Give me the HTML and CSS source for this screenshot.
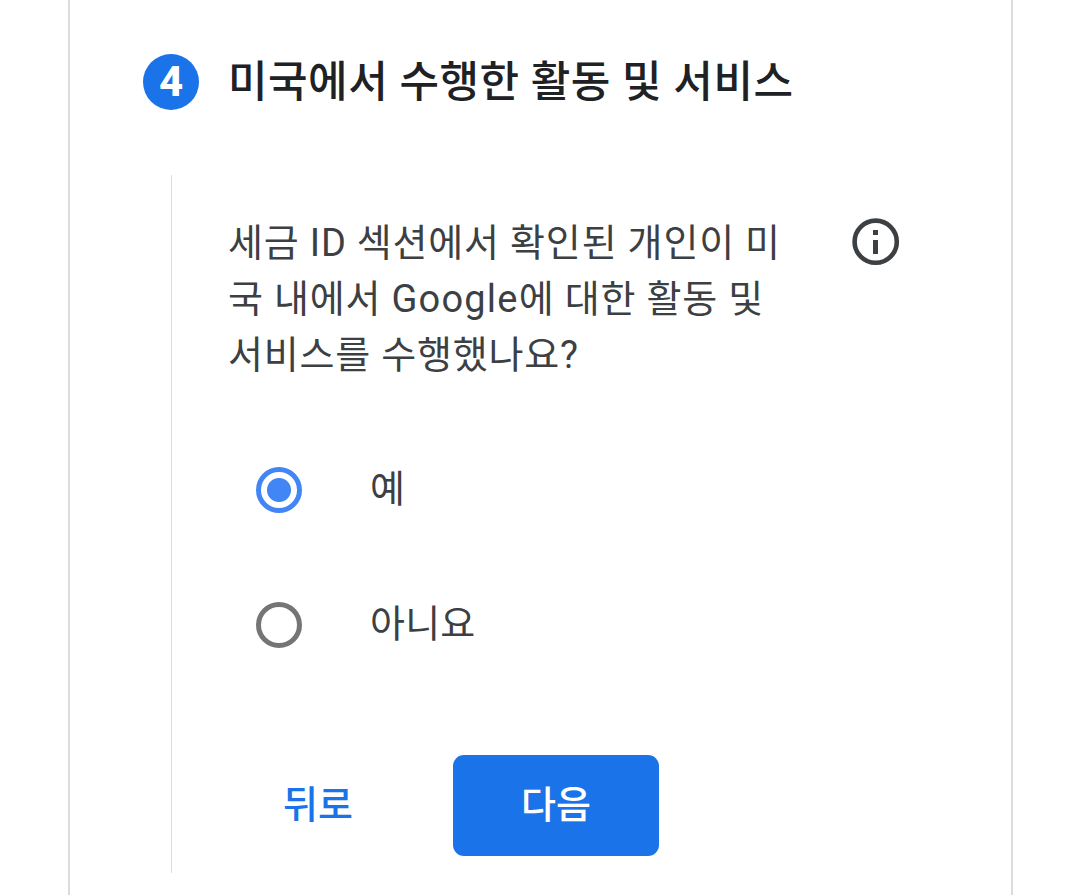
FILE: index.html
```html
<!DOCTYPE html>
<html lang="ko">
<head>
    <meta charset="UTF-8">
    <meta name="viewport" content="width=device-width, initial-scale=1.0">
    <title>세금 정보</title>
    <link rel="stylesheet" href="styles.css">
</head>
<body>

    <div class="card">
        <div class="step-header">
            <div class="step-number">4</div>
            <h2>미국에서 수행한 활동 및 서비스</h2>
        </div>

        <div class="step-body">
            <div class="question">
                <p>세금 ID 섹션에서 확인된 개인이 미<br>국 내에서 <span class="latin">Google</span>에 대한 활동 및<br>서비스를 수행했나요?</p>
                <svg class="info-icon" viewBox="0 0 48 48">
                    <circle cx="23.7" cy="23.7" r="21.1" fill="none" stroke="#3c4043" stroke-width="4.6"/>
                    <rect x="21" y="12" width="5" height="5" fill="#3c4043"/>
                    <rect x="21" y="22" width="5" height="14" fill="#3c4043"/>
                </svg>
            </div>

            <div class="options">
                <label class="option">
                    <input type="radio" name="activity" checked>
                    <span>예</span>
                </label>
                <label class="option">
                    <input type="radio" name="activity">
                    <span>아니요</span>
                </label>
            </div>

            <div class="actions">
                <button class="back">뒤로</button>
                <button class="next">다음</button>
            </div>
        </div>
    </div>

</body>
</html>
```

FILE: styles.css
```css
* {
    box-sizing: border-box;
}

body {
    margin: 0;
    height: 100vh;
    overflow: hidden;
    font-family: Roboto, "Noto Sans CJK KR", sans-serif;
    color: #3c4043;
    background-color: #fff;
}

.card {
    width: 945px;
    height: 895px;
    margin-left: 68px;
    padding: 54px 73px 0;
    border-left: 2px solid #dadce0;
    border-right: 2px solid #dadce0;
}

.step-header {
    display: flex;
    align-items: center;
    height: 56px;
}

.step-number {
    display: flex;
    align-items: center;
    justify-content: center;
    width: 56px;
    height: 56px;
    margin-right: 29px;
    padding-bottom: 2px;
    border-radius: 50%;
    background-color: #1a73e8;
    color: #fff;
    font-size: 42px;
    font-weight: 800;
}

.step-header h2 {
    margin: 0;
    font-size: 43px;
    font-weight: 500;
    line-height: 56px;
    letter-spacing: 0.5px;
    color: #202124;
    white-space: nowrap;
}

/* Vertical line under the step number */
.step-body {
    height: 698px;
    margin: 65px 0 0 28px;
    padding: 40px 0 0 56px;
    border-left: 1px solid #dadce0;
}

.question {
    display: flex;
    justify-content: space-between;
    width: 672px;
}

.question p {
    margin: 0;
    font-size: 38px;
    line-height: 56px;
    letter-spacing: 0.8px;
    white-space: nowrap;
}

.question .latin {
    letter-spacing: 1.2px;
}

.info-icon {
    width: 48px;
    height: 48px;
    margin-top: 3px;
}

.options {
    display: flex;
    flex-direction: column;
    gap: 79px;
    margin: 79px 0 0 28px;
}

.option {
    display: flex;
    align-items: center;
    height: 56px;
    font-size: 38px;
    letter-spacing: 0.2px;
}

.option input {
    appearance: none;
    width: 46px;
    height: 46px;
    margin: 0 68px 0 0;
    border: 5px solid #757575;
    border-radius: 50%;
}

.option input:checked {
    border-color: #4285f4;
    background: radial-gradient(circle, #4285f4 11.5px, transparent 12.5px);
}

.option span {
    line-height: 54px;
    padding-bottom: 2px;
}

.actions {
    display: flex;
    margin: 102px 0 0 1px;
}

.actions button {
    height: 101px;
    padding: 0 0 8px;
    border: none;
    border-radius: 11px;
    background: none;
    font-family: inherit;
    font-size: 38px;
    font-weight: 500;
}

.actions .back {
    width: 178px;
    margin-right: 46px;
    color: #1a73e8;
}

.actions .next {
    width: 206px;
    background-color: #1a73e8;
    color: #fff;
}
```
